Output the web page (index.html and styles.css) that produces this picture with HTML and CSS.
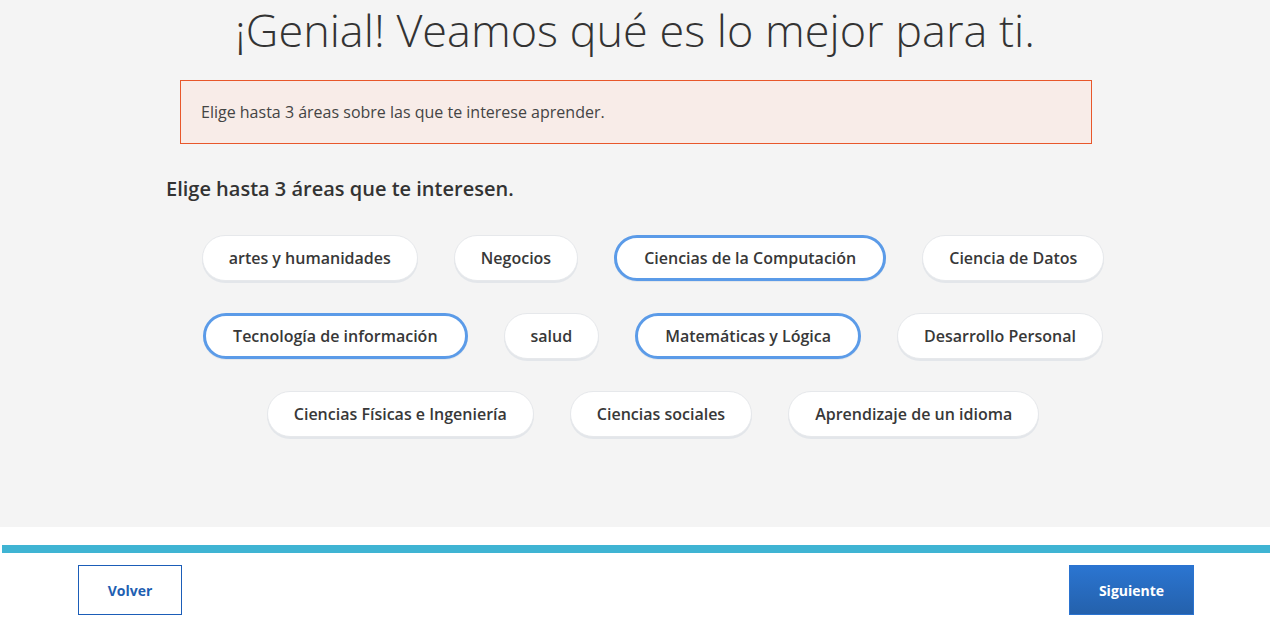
FILE: index.html
```html
<!DOCTYPE html>
<html lang="es">
<head>
<meta charset="utf-8">
<link rel="stylesheet" href="styles.css">
</head>
<body>
<main class="stage">
  <h1 class="title">¡Genial! Veamos qué es lo mejor para ti.</h1>
  <div class="alert">Elige hasta 3 áreas sobre las que te interese aprender.</div>
  <h2 class="subtitle">Elige hasta 3 áreas que te interesen.</h2>
  <div class="chips">
    <div class="row">
      <button class="chip">artes y humanidades</button>
      <button class="chip">Negocios</button>
      <button class="chip selected">Ciencias de la Computación</button>
      <button class="chip">Ciencia de Datos</button>
    </div>
    <div class="row">
      <button class="chip selected">Tecnología de información</button>
      <button class="chip">salud</button>
      <button class="chip selected">Matemáticas y Lógica</button>
      <button class="chip">Desarrollo Personal</button>
    </div>
    <div class="row">
      <button class="chip">Ciencias Físicas e Ingeniería</button>
      <button class="chip">Ciencias sociales</button>
      <button class="chip">Aprendizaje de un idioma</button>
    </div>
  </div>
</main>
<footer class="footer">
  <div class="progress"></div>
  <div class="actions">
    <button class="btn back">Volver</button>
    <button class="btn next">Siguiente</button>
  </div>
</footer>
</body>
</html>
```

FILE: styles.css
```css
* { box-sizing: border-box; }
html, body { margin: 0; padding: 0; background: #fff; }
body {
  font-family: "Open Sans", "Noto Sans", sans-serif;
  color: #333;
  width: 1270px;
  height: 627px;
  overflow: hidden;
}
.stage {
  background: #f4f4f4;
  height: 527px;
  padding-top: 0;
}
.title {
  margin: 0;
  text-align: center;
  font-weight: 300;
  font-size: 45px;
  line-height: 60px;
  color: #333;
}
.alert {
  margin: 20px 0 0 180px;
  width: 912px;
  height: 64px;
  border: 1px solid #e8572b;
  background: #f8ece8;
  display: flex;
  align-items: center;
  padding: 0 20px;
  font-size: 16px;
  color: #444;
}
.subtitle {
  margin: 32px 0 0 166px;
  font-size: 20px;
  font-weight: 600;
  line-height: 26px;
  color: #333;
}
.chips {
  margin-top: 33px;
  padding-left: 36px;
  display: flex;
  flex-direction: column;
  gap: 32px;
}
.row {
  display: flex;
  justify-content: center;
  gap: 36px;
}
.chip {
  font-family: "Open Sans", "Noto Sans", sans-serif;
  font-size: 16px;
  font-weight: 600;
  color: #383838;
  height: 46px;
  padding: 0 26px;
  border-radius: 23px;
  border: 1px solid #e6e8eb;
  background: #fff;
  box-shadow: 0 2px 0 #e3e6ea;
  cursor: pointer;
}
.chip.selected {
  border: 3px solid #5b9be8;
  padding: 0 27px;
  box-shadow: 0 1px 0 #e3e6ea;
}
.footer {
  padding-top: 18px;
}
.progress {
  margin-left: 2px;
  height: 8px;
  background: #3fb4d3;
}
.actions {
  display: flex;
  justify-content: space-between;
  padding: 12px 76px 0 78px;
}
.btn {
  font-family: "Open Sans", "Noto Sans", sans-serif;
  font-size: 14px;
  font-weight: 700;
  height: 50px;
  cursor: pointer;
}
.back {
  width: 104px;
  background: #fff;
  border: 1px solid #1b5db8;
  color: #1f5fb2;
}
.next {
  width: 125px;
  border: 1px solid #2a73d0;
  background: linear-gradient(#2b75d1, #2461ac);
  color: #fff;
}
```
